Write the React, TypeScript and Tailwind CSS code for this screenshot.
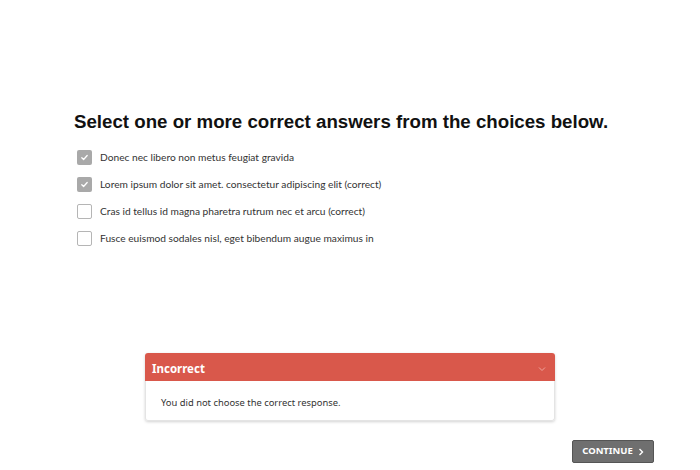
import { useState } from 'react'

const choices = [
  { label: 'Donec nec libero non metus feugiat gravida', checked: true },
  { label: 'Lorem ipsum dolor sit amet. consectetur adipiscing elit (correct)', checked: true },
  { label: 'Cras id tellus id magna pharetra rutrum nec et arcu (correct)', checked: false },
  { label: 'Fusce euismod sodales nisl, eget bibendum augue maximus in', checked: false },
]

function Check({ checked }: { checked: boolean }) {
  if (checked) {
    return (
      <span className="flex h-[15px] w-[15px] shrink-0 items-center justify-center rounded-[2px] bg-[#a9a9a9]">
        <svg width="9" height="9" viewBox="0 0 10 10" fill="none">
          <path d="M2 5.2l2 2 4-4.4" stroke="#fff" strokeWidth="1.4" strokeLinecap="round" strokeLinejoin="round" />
        </svg>
      </span>
    )
  }
  return <span className="h-[15px] w-[15px] shrink-0 rounded-[2px] border border-[#b5b5b5] bg-white" />
}

export default function App() {
  const [items] = useState(choices)

  return (
    <div className="flex h-[470px] w-[700px] flex-col bg-white" style={{ fontFamily: '"Noto Sans", sans-serif' }}>
      <h1
        className="ml-[74px] mt-[110px] text-[18.7px] font-bold leading-[24px] text-[#111]"
        style={{ fontFamily: '"Liberation Sans", Arial, sans-serif' }}
      >
        Select one or more correct answers from the choices below.
      </h1>

      <div className="ml-[77px] mt-[10px] flex flex-col" style={{ fontFamily: 'Lato, sans-serif' }}>
        {items.map(c => (
          <label key={c.label} className="flex h-[27px] items-center gap-[8px]">
            <Check checked={c.checked} />
            <span className="text-[10.2px] text-[#333]">{c.label}</span>
          </label>
        ))}
      </div>

      <div className="mx-auto mt-[101px] w-[410px] rounded-[3px] bg-white shadow-[0_1px_3px_rgba(0,0,0,0.18)]">
        <div className="flex h-[28px] items-center justify-between rounded-t-[3px] bg-[#d9584b] px-[7px] pt-[3px]">
          <span className="text-[11.5px] font-bold text-white">Incorrect</span>
          <svg width="8" height="6" viewBox="0 0 8 6" fill="none" className="mr-[2px]">
            <path d="M1 1.5l3 3 3-3" stroke="#f0a59d" strokeWidth="1" />
          </svg>
        </div>
        <div className="flex h-[40px] items-center rounded-b-[3px] border border-t-0 border-[#e4e4e4] pl-[15px] pt-[6px]">
          <span className="text-[9.4px] text-[#333]">You did not choose the correct response.</span>
        </div>
      </div>

      <button className="mr-[46px] mt-[19px] flex h-[23px] w-[82px] items-center justify-center gap-[5px] self-end rounded-[2px] border border-[#555] bg-[#6f6f6f] text-[9.5px] font-bold text-white">
        CONTINUE
        <svg width="6" height="8" viewBox="0 0 6 8" fill="none">
          <path d="M1.5 1l3 3-3 3" stroke="#fff" strokeWidth="1.4" />
        </svg>
      </button>
    </div>
  )
}
